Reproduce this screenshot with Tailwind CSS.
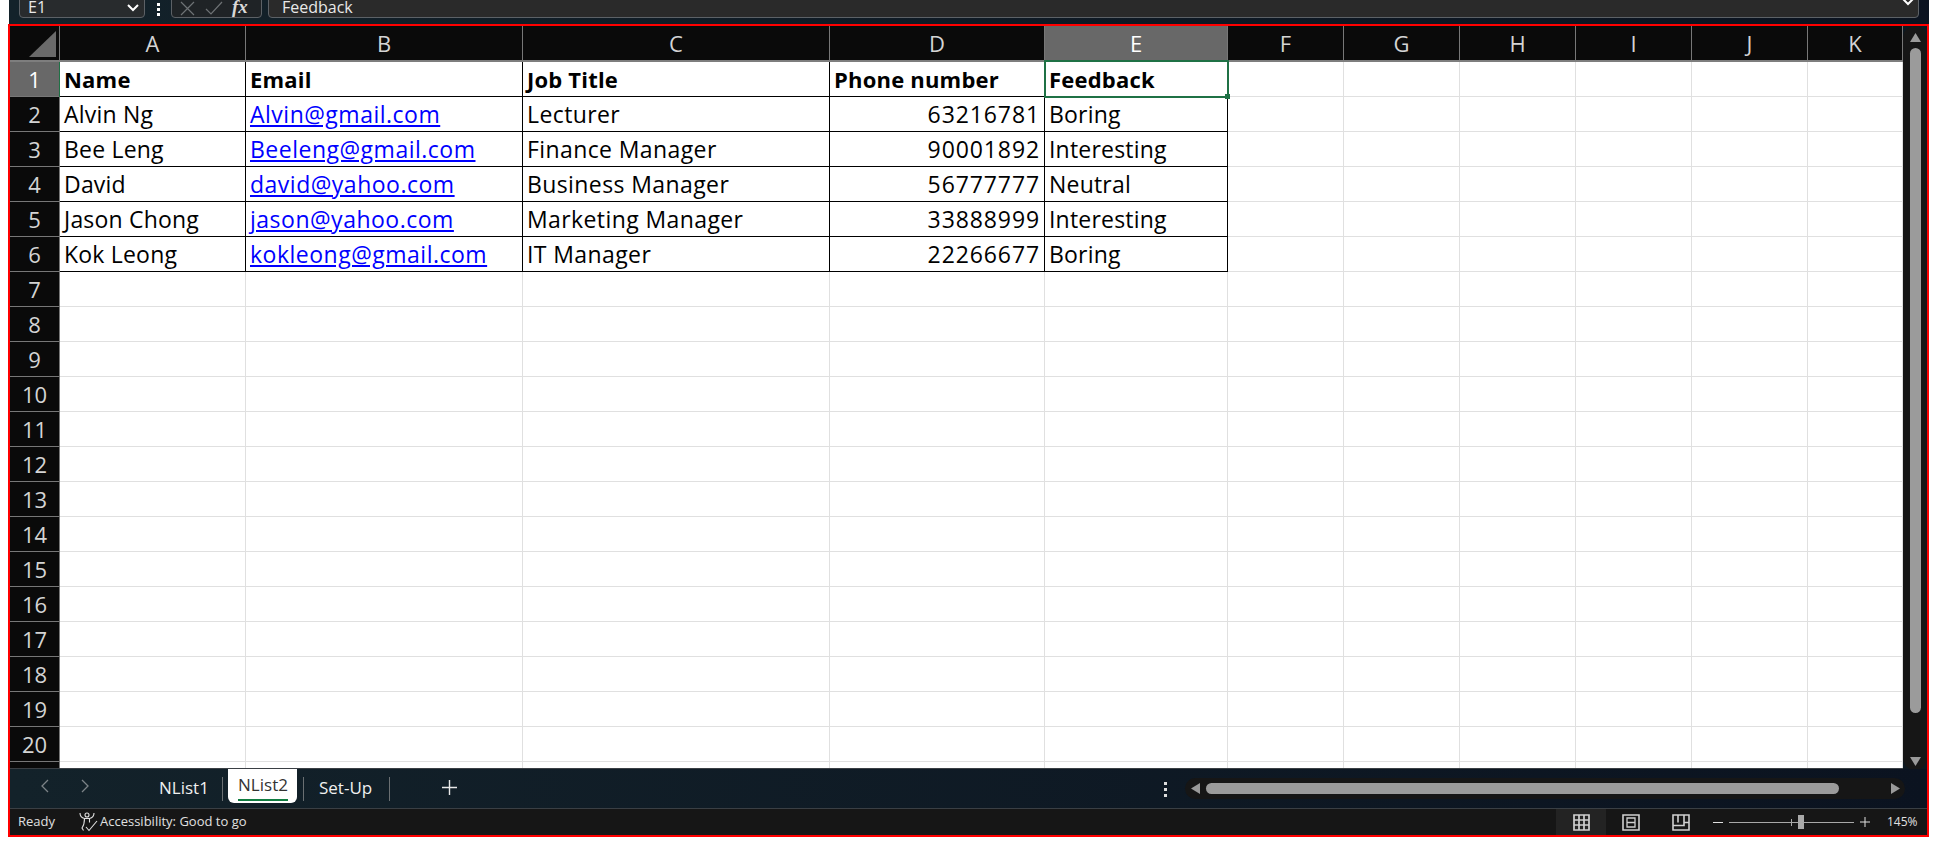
<!DOCTYPE html>
<html lang="en">
<head>
  <meta charset="UTF-8" />
  <script src="https://cdn.jsdelivr.net/npm/@tailwindcss/browser@4"></script>
  <title>NList2</title>
</head>
<body class="bg-white h-[861px] overflow-hidden font-['Open_Sans',sans-serif]">

  <!-- formula bar strip, cut off by the top of the picture -->
  <div class="ml-[9px] w-[1920px] h-[24px] overflow-hidden flex items-end pb-[6px] bg-gradient-to-r from-[#13222a] to-[#0b1320] text-[#e8e8e8] text-[16px]">
    <div class="ml-[10px] w-[126px] h-[30px] shrink-0 flex items-center justify-between pl-[8px] pr-[5px] pt-[7px] border border-[#5c6166] rounded-[4px] bg-[#282b2d]">
      <span>E1</span>
      <svg class="mt-[2px]" width="12" height="8" viewBox="0 0 12 8" fill="none" stroke="#fff" stroke-width="2"><path d="M1 1l5 5 5-5"/></svg>
    </div>
    <div class="w-[26px] h-[18px] shrink-0 flex flex-col items-center justify-center gap-[2px]">
      <i class="w-[3px] h-[3px] bg-white"></i><i class="w-[3px] h-[3px] bg-white"></i><i class="w-[3px] h-[3px] bg-white"></i>
    </div>
    <div class="w-[91px] h-[30px] shrink-0 flex items-center gap-[9px] pl-[7px] pt-[8px] border border-[#5c6166] rounded-[4px] bg-[#1f2326]">
      <svg class="mt-[2px]" width="17" height="15" viewBox="0 0 17 15" fill="none" stroke="#6e7275" stroke-width="1.2"><path d="M2 1l13 13M15 1L2 14"/></svg>
      <svg class="mt-[2px]" width="18" height="15" viewBox="0 0 18 15" fill="none" stroke="#6e7275" stroke-width="1.2"><path d="M1 8l5 5L17 1"/></svg>
      <span class="text-[19px] italic font-bold font-['Liberation_Serif',serif] text-[#d8d8d8]">fx</span>
    </div>
    <div class="ml-[6px] flex-1 mr-[10px] h-[30px] flex items-center justify-between pl-[13px] pr-[4px] pt-[7px] border border-[#5c6166] rounded-[4px] bg-[#2a2a2a]">
      <span>Feedback</span>
      <svg class="-mt-[10px]" width="12" height="8" viewBox="0 0 12 8" fill="none" stroke="#fff" stroke-width="2"><path d="M1 1l5 5 5-5"/></svg>
    </div>
  </div>

  <!-- red frame round the sheet -->
  <div class="ml-[8px] w-[1921px] h-[813px] border-2 border-[#ff0000] flex flex-col bg-[#0d1820]">
    <div class="h-[743px] flex">
      <div id="grid" class="relative w-[1893px] h-[743px] overflow-hidden border-b border-[#3a3f44]"></div>
      <!-- vertical scrollbar -->
      <div class="w-[24px] h-[744px] bg-[#161616] rounded-full flex flex-col items-center pt-[7px]">
        <svg width="11" height="9" viewBox="0 0 11 9" fill="#9a9a9a"><path d="M5.5 0L11 9H0z"/></svg>
        <div class="mt-[6px] w-[11px] h-[665px] bg-[#9b9b9b] rounded-full"></div>
        <svg class="mt-[44px]" width="11" height="9" viewBox="0 0 11 9" fill="#9a9a9a"><path d="M5.5 9L11 0H0z"/></svg>
      </div>
    </div>

    <!-- sheet tabs -->
    <div class="h-[40px] flex items-start border-b border-[#3a3f44] text-[17px] text-[#f0f0f0] bg-gradient-to-r from-[#13222a] to-[#0b1320]">
      <div class="w-[149px] h-[34px] shrink-0 flex items-center gap-[30px] pl-[30px]">
        <svg width="10" height="14" viewBox="0 0 10 14" fill="none" stroke="#7c8387" stroke-width="1.3"><path d="M8 1L2 7l6 6"/></svg>
        <svg width="10" height="14" viewBox="0 0 10 14" fill="none" stroke="#7c8387" stroke-width="1.3"><path d="M2 1l6 6-6 6"/></svg>
      </div>
      <div class="w-[63px] h-[34px] flex items-center pt-[3px]">NList1</div>
      <div class="w-px h-[24px] mt-[8px] bg-[#6a6f72]"></div>
      <div class="ml-[5px] w-[69px] h-[34px] bg-white rounded-b-[6px] text-[#333] flex flex-col items-center">
        <span class="leading-[32px] ml-[1px]">NList2</span>
        <i class="w-[50px] h-[2px] -mt-[2px] bg-[#107c41]"></i>
      </div>
      <div class="ml-[6px] w-px h-[24px] mt-[8px] bg-[#6a6f72]"></div>
      <div class="w-[85px] h-[34px] pl-[15px] flex items-center pt-[3px]">Set-Up</div>
      <div class="w-px h-[24px] mt-[8px] bg-[#6a6f72]"></div>
      <div class="ml-[52px] mt-[11px]">
        <svg width="15" height="15" viewBox="0 0 15 15" stroke="#e8e8e8" stroke-width="1.4"><path d="M7.5 0v15M0 7.5h15"/></svg>
      </div>
      <div class="ml-[707px] mt-[13px] flex flex-col gap-[3px]">
        <i class="w-[3px] h-[3px] bg-[#ddd]"></i><i class="w-[3px] h-[3px] bg-[#ddd]"></i><i class="w-[3px] h-[3px] bg-[#ddd]"></i>
      </div>
      <!-- horizontal scrollbar -->
      <div class="ml-[18px] mt-[9px] w-[720px] h-[21px] bg-[#161616] rounded-full flex items-center pl-[6px]">
        <svg width="9" height="11" viewBox="0 0 9 11" fill="#9a9a9a"><path d="M0 5.5L9 0v11z"/></svg>
        <div class="ml-[6px] w-[633px] h-[11px] bg-[#9b9b9b] rounded-full"></div>
        <svg class="ml-[52px]" width="9" height="11" viewBox="0 0 9 11" fill="#9a9a9a"><path d="M9 5.5L0 0v11z"/></svg>
      </div>
    </div>

    <!-- status bar -->
    <div class="flex-1 bg-[#161616] flex items-center text-[13px] text-[#e0e0e0]">
      <span class="ml-[8px] w-[60px]">Ready</span>
      <svg width="20" height="20" viewBox="0 0 20 20" fill="none" stroke="#e0e0e0" stroke-width="1.1"><circle cx="9" cy="3" r="2"/><path d="M2 1c0 3 2 5 4.500 5.500h5C14 6 16 4 16 1M6.500 6.500c0 4 0 6-2.500 9.500l1.500 2.500M11.500 6.500v4M8 15l3 3.500L19 9"/></svg>
      <span class="ml-[2px]">Accessibility: Good to go</span>
      <div class="ml-auto flex items-center h-full">
        <div class="w-[50px] h-full bg-[#232323] flex items-center justify-center">
          <svg width="17" height="17" viewBox="0 0 17 17" fill="none" stroke="#d0d0d0" stroke-width="1.7"><path d="M1 1h15v15H1zM1 6h15M1 11h15M6 1v15M11 1v15"/></svg>
        </div>
        <div class="w-[50px] flex items-center justify-center">
          <svg width="18" height="17" viewBox="0 0 18 17" fill="none" stroke="#d0d0d0" stroke-width="1.6"><path d="M1 1h16v15H1z"/><path d="M5 4h8v9H5zM5 8.500h8" stroke-width="1.3"/></svg>
        </div>
        <div class="w-[50px] flex items-center justify-center">
          <svg width="18" height="17" viewBox="0 0 18 17" fill="none" stroke="#d0d0d0" stroke-width="1.6"><path d="M1 1h16v15H1zM6 1v7.500M12 1v7.500h5M1 11.500h11V8.500"/></svg>
        </div>
        <div class="ml-[7px] w-[10px] h-[1px] bg-[#e0e0e0]"></div>
        <div class="relative ml-[6px] w-[125px] h-[1px] bg-[#a8a8a8]">
          <i class="absolute left-[62px] -top-[3px] w-px h-[7px] bg-[#a8a8a8]"></i>
          <i class="absolute left-[69px] -top-[7px] w-[6px] h-[14px] bg-[#a8a8a8]"></i>
        </div>
        <svg class="ml-[6px]" width="10" height="10" viewBox="0 0 10 10" stroke="#e0e0e0"><path d="M5 0v10M0 5h10"/></svg>
        <span class="ml-[17px] w-[31px] mr-[9px] text-[12px]">145%</span>
      </div>
    </div>
  </div>

  <script>
    const cols = [
      ['A', 186], ['B', 277], ['C', 307], ['D', 215], ['E', 183],
      ['F', 116], ['G', 116], ['H', 116], ['I', 116], ['J', 116], ['K', 95]
    ];
    const data = [
      ['Alvin Ng', 'Alvin@gmail.com', 'Lecturer', '63216781', 'Boring'],
      ['Bee Leng', 'Beeleng@gmail.com', 'Finance Manager', '90001892', 'Interesting'],
      ['David', 'david@yahoo.com', 'Business Manager', '56777777', 'Neutral'],
      ['Jason Chong', 'jason@yahoo.com', 'Marketing Manager', '33888999', 'Interesting'],
      ['Kok Leong', 'kokleong@gmail.com', 'IT Manager', '22266677', 'Boring']
    ];
    const head = ['Name', 'Email', 'Job Title', 'Phone number', 'Feedback'];
    const grid = document.getElementById('grid');

    // column letters
    let html = '<div class="flex h-[36px] bg-[#0a0a0a] border-b-2 border-[#7e7e7e] text-[#d4d4d4] text-[22px]">' +
      '<div class="w-[50px] h-[34px] shrink-0 border-r border-[#777] flex items-end justify-end p-[3px]"><svg width="27" height="26" viewBox="0 0 27 26" fill="#6a6a6a"><path d="M27 0v26H0z"/></svg></div>';
    cols.forEach(([name, width]) => {
      const sel = name === 'E' ? 'bg-[#686868] text-white' : '';
      html += `<div class="${sel} h-[34px] shrink-0 border-r border-[#777] flex items-center justify-center" style="width:${width}px">${name}</div>`;
    });
    html += '</div>';

    // rows
    for (let r = 1; r <= 21; r++) {
      const rowHead = r === 1 ? 'bg-[#686868] text-white' : 'bg-[#0a0a0a] text-[#d4d4d4]';
      html += `<div class="flex h-[35px]"><div class="${rowHead} w-[50px] shrink-0 border-r border-b border-[#777] text-[22px] flex items-center justify-center">${r < 21 ? r : ''}</div>`;
      cols.forEach(([name, width], c) => {
        const inTable = r <= 6 && c < 5;
        const line = inTable ? 'border-black' : 'border-[#e0e0e0]';
        let text = '';
        let style = 'text-black text-[23px] tracking-[0.2px]';
        if (inTable) {
          text = r === 1 ? head[c] : data[r - 2][c];
          if (r === 1) style = 'font-bold text-black text-[22px] tracking-[0.2px]';
          if (r > 1 && c === 1) style = 'text-[#0000ff] underline text-[23px] tracking-[0.5px]';
          if (r > 1 && c === 2) style = 'text-black text-[23px] tracking-[0.4px]';
          if (r > 1 && c === 3) style = 'text-black justify-end text-[23px] tracking-[0.9px]';
        }
        html += `<div class="${line} ${style} bg-white h-[35px] shrink-0 border-r border-b flex items-center px-[4px] whitespace-nowrap" style="width:${width}px">${text}</div>`;
      });
      html += '</div>';
    }

    // selected cell E1
    html += '<div class="absolute left-[1034px] top-[34px] w-[185px] h-[38px] border-2 border-[#1f7145]"><i class="absolute -right-[3px] -bottom-[3px] w-[5px] h-[5px] bg-[#1f7145]"></i></div>';
    html += '<i class="absolute left-[49px] top-[36px] w-[1px] h-[35px] bg-[#1f7145]"></i>';
    grid.innerHTML = html;
  </script>
</body>
</html>
